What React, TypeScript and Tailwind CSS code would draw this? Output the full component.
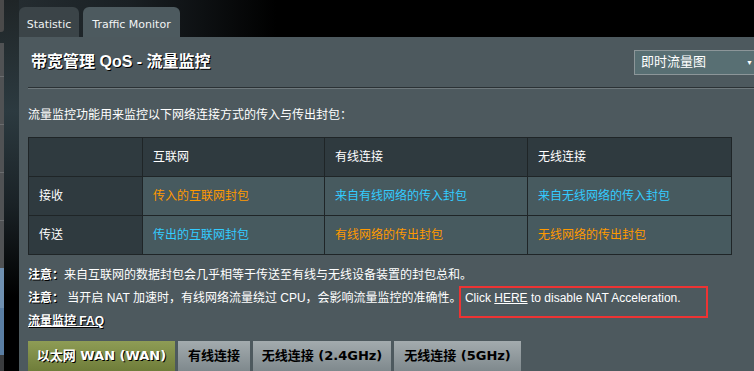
import React from "react";

const cjk = { fontFamily: '"Liberation Sans", "Noto Sans CJK SC", sans-serif' };
const verd = { fontFamily: '"DejaVu Sans", "Noto Sans CJK SC", sans-serif' };

export default function App() {
  return (
    <div className="w-[754px] h-[371px] overflow-hidden flex bg-black" style={cjk}>
      {/* left strip */}
      <div className="w-[19px] h-full flex bg-[linear-gradient(180deg,#1f2527_0%,#2c3a40_30%,#1a2226_55%,#000_80%)]">
        <div className="w-[4px] h-full flex flex-col">
          <div className="h-[32px] bg-[#4a4a4a] rounded-br-[3px]" />
          <div className="h-[11px]" />
          <div className="h-[34px] bg-[#505254] border-b border-[#6a6c6e]" />
          <div className="h-[48px] bg-[#505254] border-b border-[#6a6c6e]" />
          <div className="h-[48px] bg-[#505254] border-b border-[#6a6c6e]" />
          <div className="h-[48px] bg-[#505254] border-b border-[#6a6c6e]" />
          <div className="h-[47px] bg-[#505254]" />
          <div className="h-[40px] bg-[#6f90b1]" />
          <div className="h-[47px] bg-[#5a7ea3]" />
          <div className="flex-1 bg-[#3a3c3e]" />
        </div>
      </div>

      <div className="flex-1 flex flex-col">
        {/* top tabs */}
        <div className="h-[38px] flex items-end gap-[4px] bg-[linear-gradient(90deg,#242c30_0%,#1a2024_15%,#000_35%)]">
          <div
            className="w-[60px] h-[30px] rounded-t-[6px] bg-[#3b4448] flex items-center justify-center text-[11px] text-[#eef1f2] pt-[6px]"
            style={verd}
          >
            Statistic
          </div>
          <div
            className="w-[97px] h-[30px] rounded-t-[6px] bg-[#4d5a5f] flex items-center justify-center text-[11px] text-[#f2f4f5] pt-[6px]"
            style={verd}
          >
            Traffic Monitor
          </div>
        </div>

        {/* panel */}
        <div className="flex-1 bg-[#4d595e] pl-[9px] pt-[12px] flex flex-col text-white">
          <div className="h-[26px] flex items-center justify-between">
            <div className="pl-[3px] text-[16px] font-bold [text-shadow:1px_1px_0_#000]">
              带宽管理 QoS - 流量监控
            </div>
            <div className="w-[122px] h-[25px] bg-[#586f73] border border-[#8c9699] flex items-center justify-between pl-[6px] pr-[2px] text-[13px] -mr-[2px]">
              <span>即时流量图</span>
              <span className="text-[7px] leading-none">▼</span>
            </div>
          </div>

          <div className="mt-[12px] h-[1px] bg-[#2b3235]" />
          <div className="h-[1px] bg-[#6e787c]" />

          <div className="mt-[18px] text-[12px] leading-[16px]">
            流量监控功能用来监控以下网络连接方式的传入与传出封包：
          </div>

          <table className="mt-[14px] w-[703px] border-collapse text-[12px] table-fixed">
            <colgroup>
              <col className="w-[114px]" />
              <col className="w-[182px]" />
              <col className="w-[203px]" />
              <col className="w-[204px]" />
            </colgroup>
            <tbody>
              <tr className="h-[39px]">
                <td className="border border-[#1f2527] bg-[#2f3a3f]"></td>
                <td className="border border-[#1f2527] bg-[#2f3a3f] pl-[10px]">互联网</td>
                <td className="border border-[#1f2527] bg-[#2f3a3f] pl-[10px]">有线连接</td>
                <td className="border border-[#1f2527] bg-[#2f3a3f] pl-[10px]">无线连接</td>
              </tr>
              <tr className="h-[39px]">
                <td className="border border-[#1f2527] bg-[#2f3a3f] pl-[10px]">接收</td>
                <td className="border border-[#1f2527] bg-[#475a5f] pl-[10px] text-[#ff9900]">传入的互联网封包</td>
                <td className="border border-[#1f2527] bg-[#475a5f] pl-[10px] text-[#33ccff]">来自有线网络的传入封包</td>
                <td className="border border-[#1f2527] bg-[#475a5f] pl-[10px] text-[#33ccff]">来自无线网络的传入封包</td>
              </tr>
              <tr className="h-[39px]">
                <td className="border border-[#1f2527] bg-[#2f3a3f] pl-[10px]">传送</td>
                <td className="border border-[#1f2527] bg-[#475a5f] pl-[10px] text-[#33ccff]">传出的互联网封包</td>
                <td className="border border-[#1f2527] bg-[#475a5f] pl-[10px] text-[#ff9900]">有线网络的传出封包</td>
                <td className="border border-[#1f2527] bg-[#475a5f] pl-[10px] text-[#ff9900]">无线网络的传出封包</td>
              </tr>
            </tbody>
          </table>

          <div className="mt-[9px] text-[12px] leading-[23px]">
            <div>
              <span className="font-bold [text-shadow:1px_1px_0_#000]">注意：</span>
              来自互联网的数据封包会几乎相等于传送至有线与无线设备装置的封包总和。
            </div>
            <div>
              <span className="font-bold [text-shadow:1px_1px_0_#000]">注意：</span> 当开启 NAT 加速时，有线网络流量绕过 CPU，会影响流量监控的准确性。{" "}
              <span className="relative">
                Click <span className="underline">HERE</span> to disable NAT Acceleration.
                <span className="absolute -left-[6px] -top-[5px] w-[249px] h-[32px] border-2 border-[#ee3333]" />
              </span>
            </div>
            <div className="font-bold underline [text-shadow:1px_1px_0_#000]">流量监控 FAQ</div>
          </div>

          <div className="mt-[8px] flex gap-[3px] text-[13px] font-bold">
            <div
              className="w-[147px] h-[30px] flex items-center justify-center bg-[linear-gradient(180deg,#8e9c55_0%,#6f7d3a_100%)] text-white [text-shadow:1px_1px_0_#000]"
              style={verd}
            >
              以太网 WAN (WAN)
            </div>
            <div
              className="w-[72px] h-[30px] flex items-center justify-center bg-[linear-gradient(180deg,#a3abae_0%,#7f898d_100%)] text-black"
              style={verd}
            >
              有线连接
            </div>
            <div
              className="w-[138px] h-[30px] flex items-center justify-center bg-[linear-gradient(180deg,#a3abae_0%,#7f898d_100%)] text-black"
              style={verd}
            >
              无线连接 (2.4GHz)
            </div>
            <div
              className="w-[127px] h-[30px] flex items-center justify-center bg-[linear-gradient(180deg,#a3abae_0%,#7f898d_100%)] text-black"
              style={verd}
            >
              无线连接 (5GHz)
            </div>
          </div>
        </div>
      </div>
    </div>
  );
}
